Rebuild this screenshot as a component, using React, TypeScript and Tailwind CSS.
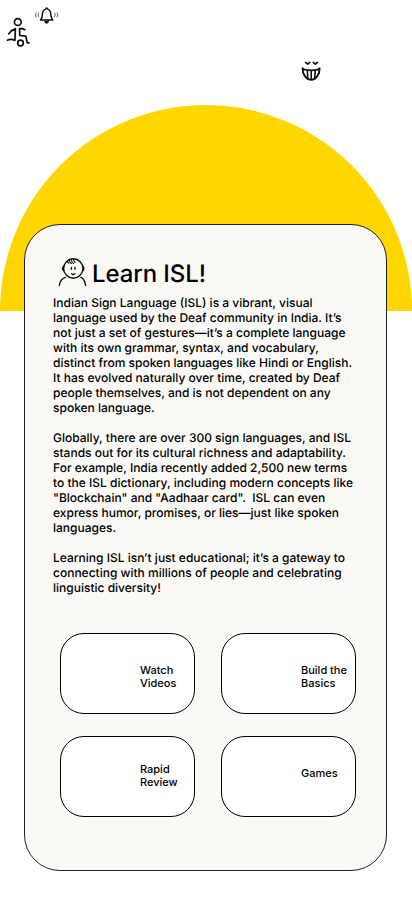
const TopicButton = ({ label, className }: { label: string; className: string }) => (
  <button
    className={`h-[81px] w-[135px] whitespace-pre rounded-[24px] border border-black bg-white pl-[79px] text-left text-[11px] font-medium leading-[13px] ${className}`}
  >
    {label}
  </button>
);

const AthleteIcon = () => (
  <svg className="ml-[5px] mt-[16px] h-8 w-[27px]" viewBox="5 16 27 32" fill="none" stroke="#111" strokeWidth="1.7" strokeLinecap="round" strokeLinejoin="round">
    <circle cx="17.8" cy="22" r="3.4" />
    <path d="M8.7 33.9Q11 30.2 15.4 28.6L14.9 40.5Q11 38.6 7.3 40.2" />
    <path d="M24.9 29.7Q22.2 28.1 19.5 28.7L19.8 35.5L25.8 36.2L27.2 42.9H29" />
    <circle cx="20.5" cy="43" r="2.8" />
  </svg>
);

const BellIcon = () => (
  <svg className="ml-[2px] mt-[5px] h-5 w-[26px]" viewBox="34 5 26 20" fill="none" stroke="#111" strokeWidth="1.5" strokeLinecap="round" strokeLinejoin="round">
    <path d="M45.8 8.9Q46.6 7.2 47.4 8.9Q50.8 9.9 50.9 15.3Q51.1 18 52.8 19.9H40.5Q42.3 18 42.3 15.3Q42.5 9.9 45.8 8.9Z" />
    <path d="M45 21.4Q46.6 24.5 48.3 21.4Z" fill="#111" />
    <path d="M36 12.7Q34.7 14.7 36 17M38.6 13Q37.4 14.9 38.6 16.7M54.8 13Q56 14.7 54.7 16.7M57.2 12.7Q58.7 14.7 57.2 17" stroke="#555" strokeWidth=".9" />
  </svg>
);

const SmileIcon = () => (
  <svg className="ml-[240px] mt-[59px] h-6 w-[22px]" viewBox="300 59 22 24" fill="none" stroke="#111" strokeWidth="1.6" strokeLinecap="round" strokeLinejoin="round">
    <path d="M305.6 62.4L307.7 64.2L309.8 62.4M313.2 62.4L315.3 64.2L317.4 62.4" />
    <path d="M302.6 68.3Q304 70.2 311.2 70.4Q318.2 70.2 319.6 68.3Q319.9 72.5 317.2 76.2Q314.8 79.7 311.2 79.9Q307.4 79.7 305 76.2Q302.3 72.5 302.6 68.3Z" strokeWidth="1.9" />
    <path d="M307.3 71L307.8 77.5M311.2 71.5V79M315.2 71L314.7 77.5" />
  </svg>
);

const ChildIcon = () => (
  <svg className="mt-[1px] h-[31px] w-[30px]" viewBox="58 257 30 31" fill="none" stroke="#111" strokeWidth="1.4" strokeLinecap="round" strokeLinejoin="round">
    <circle cx="73.3" cy="268.5" r="9.7" />
    <path d="M63.5 266.4Q61.6 268.3 63.7 270.8M82.9 266.4Q84.8 268.3 82.7 270.8" />
    <path d="M67.4 261.2Q67.7 262.6 68.8 263.2M69 260Q69.7 263 71.5 263.4M71.2 259.2Q71.5 262.2 73.6 263.4M73.5 259Q73.5 261.6 75.1 262.4" strokeWidth="1.1" />
    <path d="M71.4 267.4V269.2M75 267.4V269.2M71.6 273.7Q73.2 275.2 74.8 273.7" />
    <path d="M59.3 285.5Q60.1 279.1 65.5 277.4M85.6 285.5Q85 279.3 80.8 277.4" />
  </svg>
);

export default function App() {
  return (
    <main className="relative isolate h-[917px] w-[412px] overflow-hidden bg-white font-['Inter',sans-serif] text-black [text-rendering:geometricPrecision]">
      <div className="absolute left-0 top-[105px] -z-10 h-[206px] w-[412px] rounded-t-full bg-[#ffd600]" />
      <header className="flex h-[224px] items-start">
        <AthleteIcon />
        <BellIcon />
        <SmileIcon />
      </header>
      <section className="ml-6 h-[647px] w-[363px] rounded-[36px] border border-[#222] bg-[#faf9f6]">
        <div className="ml-[33px] mt-[31px] flex h-[39px] gap-1">
          <ChildIcon />
          <h1 className="mt-[3px] text-[24px] font-medium leading-[29px] tracking-[-0.1px]">Learn ISL!</h1>
        </div>
        <div className="ml-7 whitespace-pre text-[12px] font-medium leading-[15px]">
          <p>{`Indian Sign Language (ISL) is a vibrant, visual
language used by the Deaf community in India. It’s
not just a set of gestures—it’s a complete language
with its own grammar, syntax, and vocabulary,
distinct from spoken languages like Hindi or English.
It has evolved naturally over time, created by Deaf
people themselves, and is not dependent on any
spoken language.`}</p>
          <p className="mt-[15px]">{`Globally, there are over 300 sign languages, and ISL
stands out for its cultural richness and adaptability.
For example, India recently added 2,500 new terms
to the ISL dictionary, including modern concepts like
"Blockchain" and "Aadhaar card".  ISL can even
express humor, promises, or lies—just like spoken
languages.`}</p>
          <p className="mt-[15px]">{`Learning ISL isn’t just educational; it’s a gateway to
connecting with millions of people and celebrating
linguistic diversity!`}</p>
        </div>
        <nav className="ml-[35px] mt-[38px] grid grid-cols-[135px_135px] gap-x-[26px] gap-y-[22px]">
          <TopicButton label={"Watch\nVideos"} className="pt-[6px]" />
          <TopicButton label={"Build the\nBasics"} className="pt-[6px]" />
          <TopicButton label={"Rapid\nReview"} className="pb-[2px]" />
          <TopicButton label="Games" className="pb-[7px]" />
        </nav>
      </section>
    </main>
  );
}
